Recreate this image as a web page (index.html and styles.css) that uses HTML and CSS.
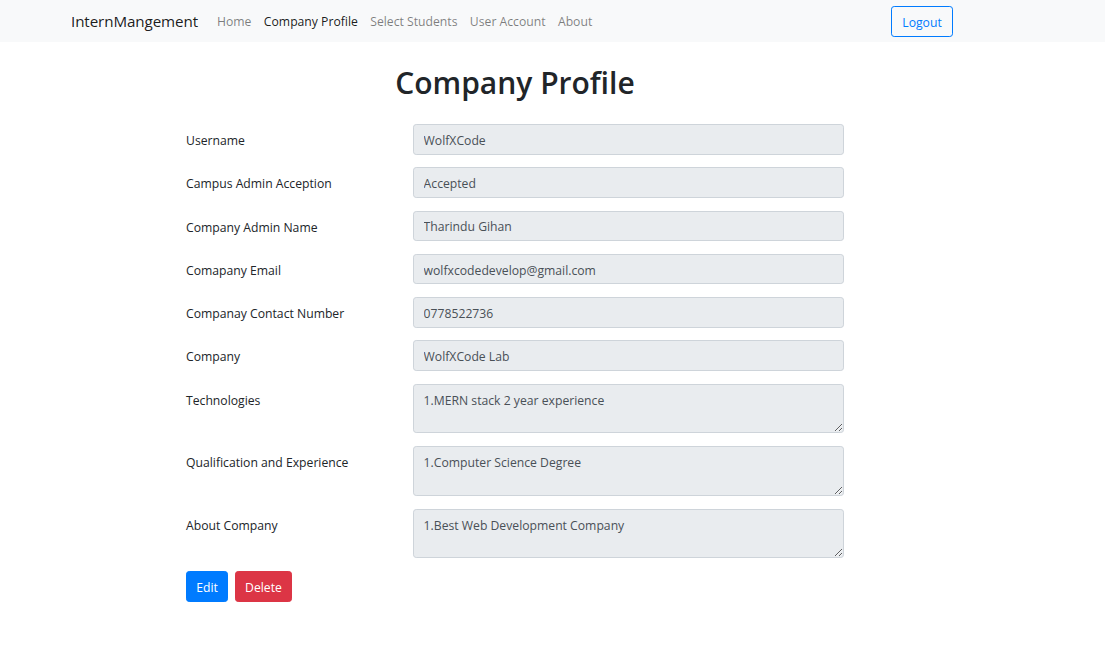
FILE: index.html
```html
<!DOCTYPE html>
<html lang="en">
<head>
<meta charset="utf-8">
<title>Company Profile</title>
<link rel="stylesheet" href="styles.css">
</head>
<body>
<nav class="navbar">
  <a class="brand" href="#">InternMangement</a>
  <ul class="nav-links">
    <li><a class="nav-link" href="#">Home</a></li>
    <li><a class="nav-link active" href="#">Company Profile</a></li>
    <li><a class="nav-link" href="#">Select Students</a></li>
    <li><a class="nav-link" href="#">User Account</a></li>
    <li><a class="nav-link" href="#">About</a></li>
  </ul>
  <button class="btn btn-outline">Logout</button>
</nav>
<main class="page">
  <h1 class="title">Company Profile</h1>
  <form class="profile-form">
    <div class="form-row"><label class="form-label">Username</label><input class="form-control" readonly value="WolfXCode"></div>
    <div class="form-row"><label class="form-label">Campus Admin Acception</label><input class="form-control" readonly value="Accepted"></div>
    <div class="form-row"><label class="form-label">Company Admin Name</label><input class="form-control" readonly value="Tharindu Gihan"></div>
    <div class="form-row"><label class="form-label">Comapany Email</label><input class="form-control" readonly value="wolfxcodedevelop@gmail.com"></div>
    <div class="form-row"><label class="form-label">Companay Contact Number</label><input class="form-control" readonly value="0778522736"></div>
    <div class="form-row"><label class="form-label">Company</label><input class="form-control" readonly value="WolfXCode Lab"></div>
    <div class="form-row"><label class="form-label">Technologies</label><textarea class="form-control area" rows="2" readonly>1.MERN stack 2 year experience</textarea></div>
    <div class="form-row"><label class="form-label">Qualification and Experience</label><textarea class="form-control area" rows="2" readonly>1.Computer Science Degree</textarea></div>
    <div class="form-row"><label class="form-label">About Company</label><textarea class="form-control area" rows="2" readonly>1.Best Web Development Company</textarea></div>
    <div class="actions">
      <button type="button" class="btn btn-primary">Edit</button>
      <button type="button" class="btn btn-danger">Delete</button>
    </div>
  </form>
</main>
</body>
</html>
```
FILE: styles.css
```css
* { box-sizing: border-box; }
html, body { margin: 0; background: #fff; }
body {
  font-family: "Open Sans", "Noto Sans", sans-serif;
  font-size: 12.2px;
  line-height: 1.5;
  color: #212529;
}
.navbar {
  height: 42px;
  background: #f8f9fa;
  display: flex;
  align-items: center;
  padding: 0 152px 0 71px;
}
.brand {
  font-size: 15.2px;
  color: rgba(0,0,0,.9);
  text-decoration: none;
  margin-right: 12.8px;
  letter-spacing: -0.1px;
}
.nav-links {
  list-style: none;
  display: flex;
  margin: 0;
  padding: 0;
}
.nav-link {
  display: block;
  padding: 8px 6.2px 6px;
  color: rgba(0,0,0,.5);
  text-decoration: none;
}
.nav-link.active { color: rgba(0,0,0,.9); }
.btn {
  font-family: inherit;
  font-size: 12.2px;
  line-height: 19.2px;
  padding: 4.8px 9.6px;
  border-radius: 3.2px;
  border: 1px solid transparent;
  cursor: pointer;
}
.btn-outline {
  margin-left: auto;
  margin-top: 1px;
  background: transparent;
  border-color: #007bff;
  color: #007bff;
  width: 62px;
  padding: 5.4px 0 4.2px;
}
.btn-primary { background: #007bff; color: #fff; border-color: #007bff; width: 42px; padding: 5.8px 0 3.8px; }
.btn-danger { background: #dc3545; color: #fff; border-color: #dc3545; width: 57px; padding: 5.8px 0 3.8px; }
.page {
  width: 658px;
  margin-left: 186px;
}
.title {
  margin: 22px 0 21.6px;
  text-align: center;
  font-size: 30px;
  font-weight: 600;
  line-height: 38.4px;
  color: #212529;
}
.form-row {
  display: grid;
  grid-template-columns: 227px 431px;
  align-items: start;
  margin-bottom: 12.8px;
}
.form-label {
  padding-top: 7px;
  line-height: 19.2px;
}
.form-control {
  display: block;
  width: 100%;
  height: 30.5px;
  padding: 5.8px 9.6px 3.8px;
  font-family: inherit;
  font-size: 12.2px;
  line-height: 19.2px;
  color: #495057;
  background: #e9ecef;
  border: 1px solid #ced4da;
  border-radius: 3.2px;
  outline: none;
}
.area {
  height: 49.7px;
  resize: vertical;
}
.actions {
  display: flex;
  gap: 7px;
}
```
